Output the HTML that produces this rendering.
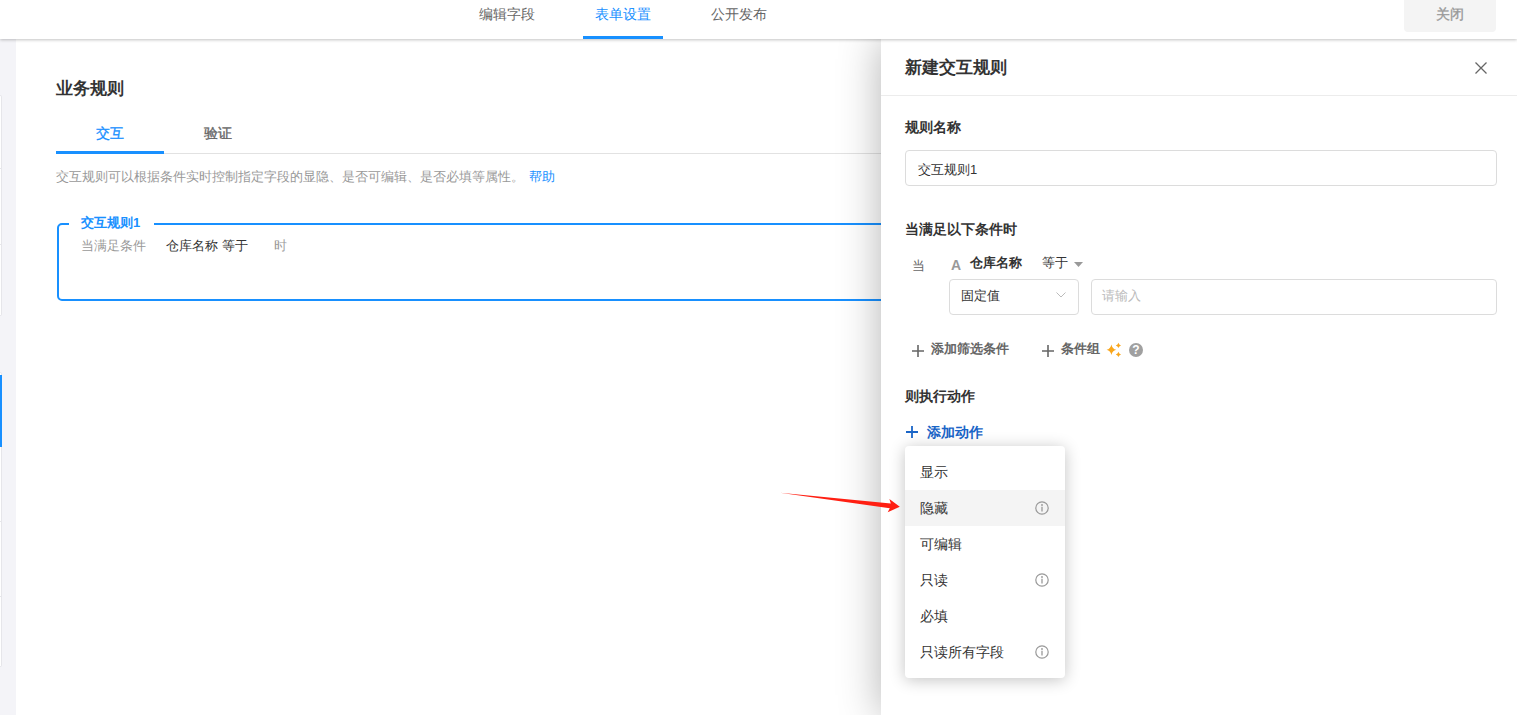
<!DOCTYPE html>
<html><head><meta charset="utf-8">
<style>
*{box-sizing:border-box;margin:0;padding:0}
html,body{width:1517px;height:715px;overflow:hidden;background:#fff;font-family:"Liberation Sans",sans-serif;color:#333}
.a{position:absolute;white-space:nowrap}
.t{position:absolute;white-space:nowrap;line-height:1}
</style></head><body>
<!-- left strip -->
<div class="a" style="left:0;top:39px;width:16px;height:676px;background:#f4f4f8"></div>
<div class="a" style="left:0;top:95px;width:2px;height:221px;background:#fff;border:1px solid #e6e6ea;border-left:none;border-radius:0 2px 2px 0"></div>
<div class="a" style="left:0;top:168px;width:2px;height:1px;background:#e6e6ea"></div>
<div class="a" style="left:0;top:244px;width:2px;height:1px;background:#e6e6ea"></div>
<div class="a" style="left:0;top:372px;width:2px;height:295px;background:#fff;border:1px solid #e6e6ea;border-left:none;border-radius:0 2px 2px 0"></div>
<div class="a" style="left:0;top:375px;width:2px;height:72px;background:#1890ff"></div>
<div class="a" style="left:0;top:521px;width:2px;height:1px;background:#e6e6ea"></div>
<div class="a" style="left:0;top:596px;width:2px;height:1px;background:#e6e6ea"></div>

<!-- header -->
<div class="a" style="left:0;top:0;width:1517px;height:39px;background:#fff;box-shadow:0 1px 3px rgba(0,0,0,0.24);z-index:2">
  <div class="t" style="left:479px;top:7px;font-size:14px;color:#666">编辑字段</div>
  <div class="t" style="left:595px;top:7px;font-size:14px;color:#1890ff">表单设置</div>
  <div class="a" style="left:583px;top:36px;width:80px;height:3px;background:#1890ff"></div>
  <div class="t" style="left:711px;top:7px;font-size:14px;color:#666">公开发布</div>
  <div class="a" style="left:1404px;top:-4px;width:92px;height:36px;background:#f4f4f4;border-radius:4px"></div>
  <div class="t" style="left:1436px;top:7px;font-size:14px;color:#999;-webkit-text-stroke:0.35px #999">关闭</div>
</div>

<!-- main -->
<div class="t" style="left:56px;top:80px;font-size:17px;font-weight:bold;color:#333">业务规则</div>
<div class="t" style="left:96px;top:126px;font-size:14px;color:#1890ff;-webkit-text-stroke:0.3px #1890ff">交互</div>
<div class="t" style="left:204px;top:126px;font-size:14px;color:#666;-webkit-text-stroke:0.35px #666">验证</div>
<div class="a" style="left:56px;top:153px;width:830px;height:1px;background:#e2e2e2"></div>
<div class="a" style="left:56px;top:151px;width:108px;height:3px;background:#1890ff"></div>
<div class="t" style="left:56px;top:170px;font-size:13px;color:#999">交互规则可以根据条件实时控制指定字段的显隐、是否可编辑、是否必填等属性。 <span style="color:#1890ff;margin-left:1px">帮助</span></div>

<div class="a" style="left:57px;top:223px;width:860px;height:78px;border:2px solid #1890ff;border-radius:5px"></div>
<div class="a" style="left:69px;top:218px;width:85px;height:10px;background:#fff"></div>
<div class="t" style="left:81px;top:216px;font-size:13px;font-weight:bold;color:#1890ff">交互规则1</div>
<div class="t" style="left:81px;top:239px;font-size:13px;color:#999">当满足条件</div>
<div class="t" style="left:166px;top:239px;font-size:13px;color:#333">仓库名称 等于</div>
<div class="t" style="left:274px;top:239px;font-size:13px;color:#999">时</div>

<!-- red arrow -->
<svg class="a" style="left:0;top:0;z-index:5" width="1517" height="715">
  <path d="M780 492.8 L890.8 503.4 L889.4 499 L899.8 506.8 L887.7 512.2 L889.8 508.2 Z" fill="#ff1f12"/>
</svg>

<!-- drawer -->
<div class="a" style="left:881px;top:39px;width:636px;height:676px;background:#fff;box-shadow:0 0 40px rgba(0,0,0,0.3);z-index:1">
</div>
<div class="a" style="left:881px;top:39px;width:636px;height:676px;z-index:3">
  <div class="t" style="left:24px;top:20px;font-size:17px;font-weight:bold;color:#333">新建交互规则</div>
  <svg class="a" style="left:593px;top:22px" width="14" height="14" viewBox="0 0 14 14"><path d="M1.5 1.5L12.5 12.5M12.5 1.5L1.5 12.5" stroke="#666" stroke-width="1.3"/></svg>
  <div class="a" style="left:0;top:56px;width:636px;height:1px;background:#ececec"></div>

  <div class="t" style="left:24px;top:81px;font-size:14px;font-weight:bold;color:#333">规则名称</div>
  <div class="a" style="left:24px;top:111px;width:592px;height:36px;border:1px solid #dcdcdc;border-radius:4px"></div>
  <div class="t" style="left:37px;top:124px;font-size:13px;color:#333">交互规则1</div>

  <div class="t" style="left:24px;top:183px;font-size:14px;font-weight:bold;color:#333">当满足以下条件时</div>
  <div class="t" style="left:31px;top:220px;font-size:13px;color:#666">当</div>
  <div class="t" style="left:70px;top:219px;font-size:14px;font-weight:bold;color:#999">A</div>
  <div class="t" style="left:89px;top:217px;font-size:13px;font-weight:bold;color:#333">仓库名称</div>
  <div class="t" style="left:161px;top:217px;font-size:13px;color:#333">等于</div>
  <svg class="a" style="left:193px;top:223px" width="9" height="5" viewBox="0 0 9 5"><path d="M0 0H9L4.5 5Z" fill="#999"/></svg>
  <div class="a" style="left:68px;top:240px;width:130px;height:36px;border:1px solid #dcdcdc;border-radius:4px"></div>
  <div class="t" style="left:80px;top:250px;font-size:13px;color:#333">固定值</div>
  <svg class="a" style="left:175px;top:253px" width="10" height="6" viewBox="0 0 10 6"><path d="M0.5 0.5L5 5L9.5 0.5" stroke="#bbb" stroke-width="1" fill="none"/></svg>
  <div class="a" style="left:210px;top:240px;width:406px;height:36px;border:1px solid #dcdcdc;border-radius:4px"></div>
  <div class="t" style="left:221px;top:250px;font-size:13px;color:#bbb">请输入</div>

  <svg class="a" style="left:31px;top:306px" width="12" height="12" viewBox="0 0 12 12"><path d="M6 0V12M0 6H12" stroke="#666" stroke-width="1.6"/></svg>
  <div class="t" style="left:50px;top:303px;font-size:13px;font-weight:bold;color:#666">添加筛选条件</div>
  <svg class="a" style="left:161px;top:306px" width="12" height="12" viewBox="0 0 12 12"><path d="M6 0V12M0 6H12" stroke="#666" stroke-width="1.6"/></svg>
  <div class="t" style="left:180px;top:303px;font-size:13px;font-weight:bold;color:#666">条件组</div>
  <svg class="a" style="left:224px;top:303px" width="18" height="18" viewBox="0 0 18 18"><path d="M6.4 2.4000000000000004 Q7.300000000000001 6.8 11.2 7.7 Q7.300000000000001 8.6 6.4 13.0 Q5.5 8.6 1.6000000000000005 7.7 Q5.5 6.8 6.4 2.4000000000000004Z" fill="#f9a61c"/><path d="M13.4 0.6999999999999997 Q13.9 2.9 16.0 3.4 Q13.9 3.9 13.4 6.1 Q12.9 3.9 10.8 3.4 Q12.9 2.9 13.4 0.6999999999999997Z" fill="#f9a61c"/><path d="M13.4 9.7 Q13.9 11.9 16.0 12.4 Q13.9 12.9 13.4 15.100000000000001 Q12.9 12.9 10.8 12.4 Q12.9 11.9 13.4 9.7Z" fill="#f9a61c"/></svg>
  <div class="a" style="left:248px;top:304px;width:14px;height:14px;border-radius:50%;background:#a0a0a0;color:#fff;font-size:12px;font-weight:bold;line-height:15px;text-align:center">?</div>

  <div class="t" style="left:24px;top:350px;font-size:14px;font-weight:bold;color:#333">则执行动作</div>
  <svg class="a" style="left:25px;top:387px" width="12" height="12" viewBox="0 0 12 12"><path d="M6 0V12M0 6H12" stroke="#1a65c7" stroke-width="1.8"/></svg>
  <div class="t" style="left:46px;top:386px;font-size:14px;font-weight:bold;color:#1a65c7">添加动作</div>
</div>

<!-- dropdown -->
<div class="a" style="left:905px;top:446px;width:160px;height:232px;background:#fff;border-radius:4px;box-shadow:0 2px 16px rgba(0,0,0,0.24);z-index:4">
  <div class="a" style="left:0;top:44px;width:160px;height:36px;background:#f4f4f4"></div>
  <div class="t" style="left:15px;top:19px;font-size:14px;color:#333">显示</div>
  <div class="t" style="left:15px;top:55px;font-size:14px;color:#333">隐藏</div>
  <div class="t" style="left:15px;top:91px;font-size:14px;color:#333">可编辑</div>
  <div class="t" style="left:15px;top:127px;font-size:14px;color:#333">只读</div>
  <div class="t" style="left:15px;top:163px;font-size:14px;color:#333">必填</div>
  <div class="t" style="left:15px;top:199px;font-size:14px;color:#333">只读所有字段</div>
  <svg class="a" style="left:130px;top:55px" width="14" height="14" viewBox="0 0 14 14"><circle cx="7" cy="7" r="6.2" stroke="#999" stroke-width="1.2" fill="none"/><circle cx="7" cy="4" r="0.9" fill="#999"/><path d="M7 5.8V10.5" stroke="#999" stroke-width="1.3"/></svg>
  <svg class="a" style="left:130px;top:127px" width="14" height="14" viewBox="0 0 14 14"><circle cx="7" cy="7" r="6.2" stroke="#999" stroke-width="1.2" fill="none"/><circle cx="7" cy="4" r="0.9" fill="#999"/><path d="M7 5.8V10.5" stroke="#999" stroke-width="1.3"/></svg>
  <svg class="a" style="left:130px;top:199px" width="14" height="14" viewBox="0 0 14 14"><circle cx="7" cy="7" r="6.2" stroke="#999" stroke-width="1.2" fill="none"/><circle cx="7" cy="4" r="0.9" fill="#999"/><path d="M7 5.8V10.5" stroke="#999" stroke-width="1.3"/></svg>
</div>
</body></html>
